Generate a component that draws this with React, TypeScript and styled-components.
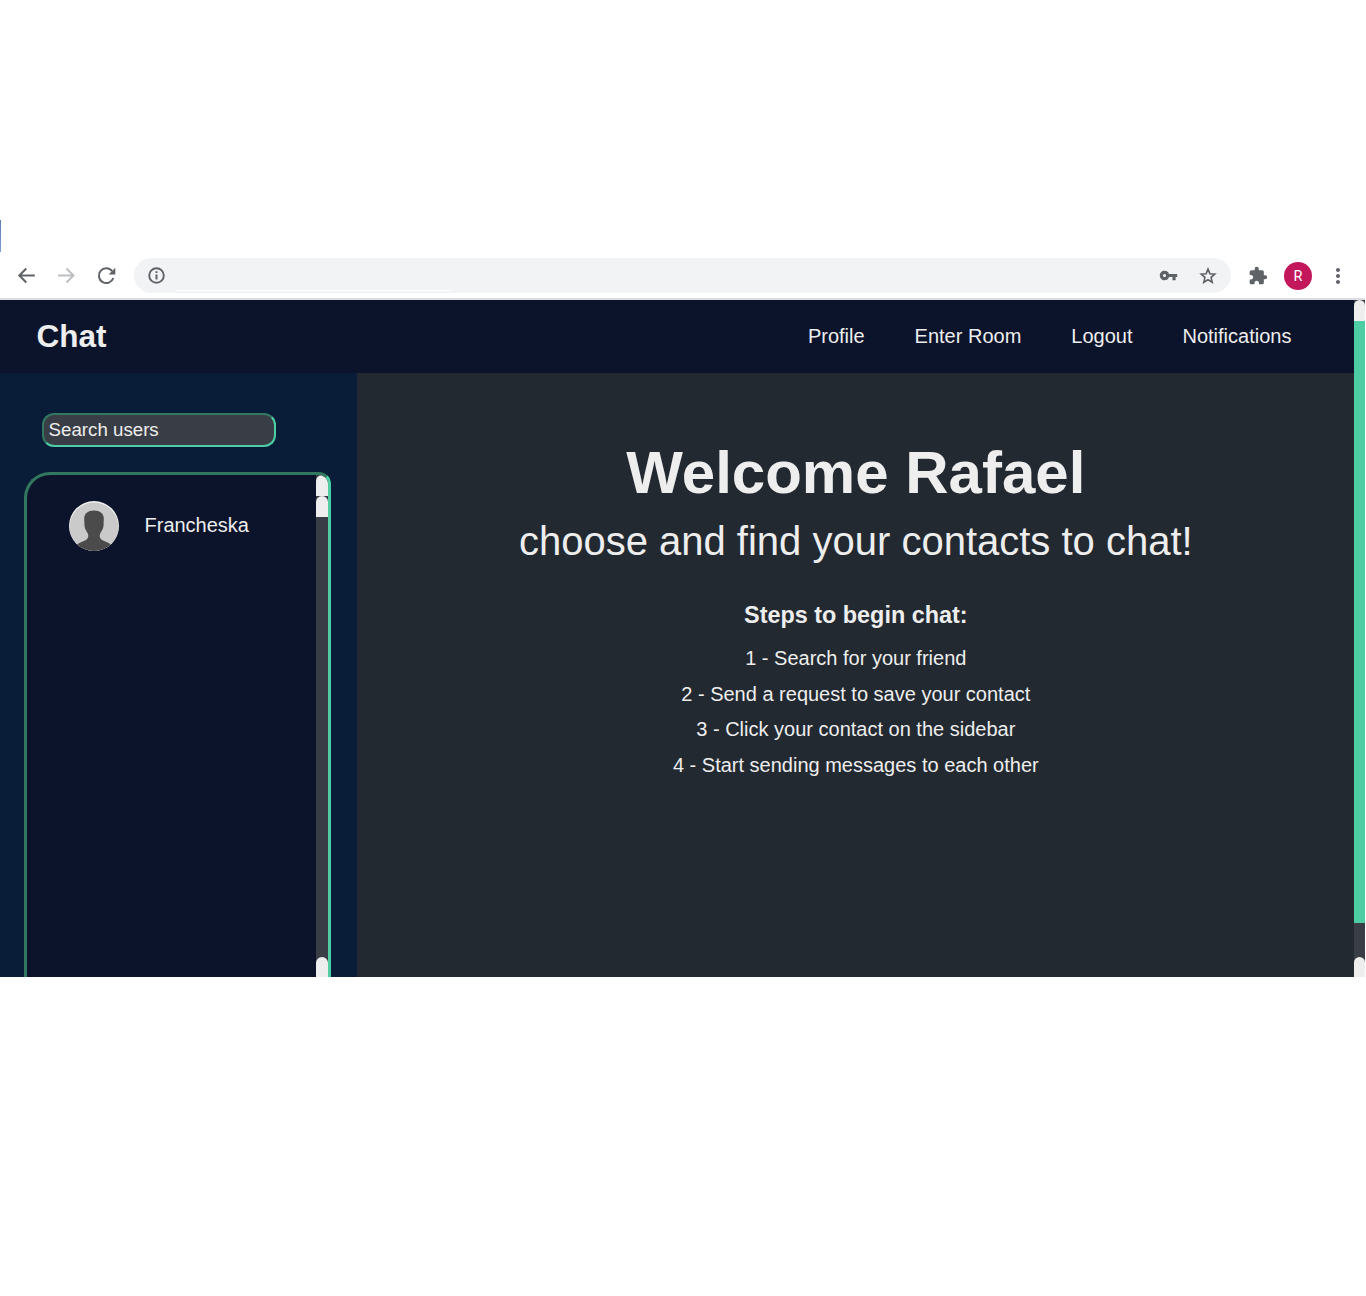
import React from "react";
import styled, { createGlobalStyle } from "styled-components";
import { MdVpnKey, MdExtension, MdMoreVert } from "react-icons/md";

const Global = createGlobalStyle`
  * { box-sizing: border-box; }
  body { margin: 0; background: #fff; font-family: "Liberation Sans", Arial, sans-serif; }
  h1, h2, h3, p, ol, ul { margin: 0; padding: 0; list-style: none; }
`;

const Page = styled.div`
  width: 1365px;
  height: 1296px;
  padding-top: 220px;
`;

const TabStrip = styled.div`
  height: 32px;
  width: 1px;
  background: linear-gradient(#5d7fb0, #7a9fd6);
`;

const Toolbar = styled.div`
  height: 48px;
  display: flex;
  align-items: center;
  padding: 0 0 0 14px;
  border-bottom: 2px solid #dcdee2;
`;

const ToolButton = styled.span<{ $width: number; $color?: string }>`
  width: ${(p) => p.$width}px;
  height: 24px;
  padding-top: 1px;
  display: flex;
  align-items: center;
  justify-content: center;
  flex: none;
  color: ${(p) => p.$color ?? "#5f6368"};
`;

const AddressBar = styled.div`
  width: 1097px;
  height: 35px;
  flex: none;
  border-radius: 18px;
  background: #f1f3f4;
  display: flex;
  align-items: center;
  padding: 0 13px;
`;

const AddressText = styled.div`
  align-self: flex-end;
  width: 275px;
  height: 1px;
  margin: 0 auto 2px 9px;
  background: #fff;
`;

const Account = styled.div`
  width: 28px;
  height: 28px;
  flex: none;
  border-radius: 50%;
  background: #c2185b;
  color: #fff;
  font: 14.5px/29px Roboto, sans-serif;
  text-align: center;
  margin-top: 1px;
`;

const Viewport = styled.div`
  height: 677px;
  display: flex;
  overflow: hidden;
`;

const Content = styled.div`
  flex: 1;
  display: flex;
  flex-direction: column;
`;

const Navbar = styled.header`
  height: 73px;
  padding: 0 62.6px 2px 36.4px;
  display: flex;
  align-items: center;
  justify-content: space-between;
  background: #0c142b;
  color: #eee;
`;

const Brand = styled.h1`
  font-size: 31.5px;
  line-height: 36px;
`;

const Nav = styled.nav`
  display: flex;
  gap: 50px;
  font-size: 20px;
  line-height: 24px;
`;

const Body = styled.div`
  flex: 1;
  display: flex;
`;

const Sidebar = styled.aside`
  width: 357px;
  padding: 40px 26px 0 24px;
  background: #091d38;
  display: flex;
  flex-direction: column;
`;

const Search = styled.div`
  width: 234px;
  height: 34px;
  margin-left: 18px;
  padding-left: 4.6px;
  border: 2px solid;
  border-color: #31785f #4ecca3 #4ecca3 #31785f;
  border-radius: 12px;
  background: #393e46;
  color: #eee;
  font-size: 18.7px;
  line-height: 30px;
`;

const ContactPanel = styled.div`
  flex: 1;
  margin-top: 25px;
  display: flex;
  overflow: hidden;
  border: 3px solid;
  border-bottom: 0;
  border-color: #31785f #4ecca3 #4ecca3 #31785f;
  border-radius: 26px 12px 0 0;
  background: #0c142b;
`;

const Contacts = styled.ul`
  flex: 1;
  padding: 26px 0 0 42px;
`;

const Contact = styled.li`
  display: flex;
  align-items: center;
  gap: 25.5px;
  height: 50px;
  color: #eee;
  font-size: 20px;
`;

const ContactName = styled.span`
  padding-bottom: 2px;
`;

const Scroll = styled.div<{ $width: number }>`
  width: ${(p) => p.$width}px;
  flex: none;
  display: flex;
  flex-direction: column;
  background: #393e46;
`;

const ScrollButton = styled.span<{ $last?: boolean; $height?: number }>`
  height: ${(p) => p.$height ?? 21}px;
  margin-top: ${(p) => (p.$last ? "auto" : 0)};
  border-radius: 6px 6px 0 0;
  background: #eee;
`;

const Thumb = styled.span`
  height: 602px;
  background: #4ecca3;
`;

const Main = styled.main`
  flex: 1;
  padding: 65px 0 0 0.6px;
  background: #232931;
  color: #eee;
  text-align: center;
`;

const Title = styled.h2`
  font-size: 60px;
  line-height: 69px;
`;

const Subtitle = styled.p`
  font-size: 40px;
  line-height: 46px;
  margin-top: 11px;
`;

const StepsTitle = styled.h3`
  font-size: 23.4px;
  line-height: 28px;
  margin-top: 37px;
`;

const Steps = styled.ol`
  margin-top: 12px;
  font-size: 20px;
  line-height: 35.6px;
`;

const Arrow = ({ forward }: { forward?: boolean }) => (
  <svg width="24" height="24" viewBox="0 0 24 24" fill="none" stroke="currentColor" strokeWidth="2">
    <path d={forward ? "M4 11.500H19.500M12.500 4.500L19.500 11.500L12.500 18.500" : "M20.800 11.500H5.300M12.300 4.500L5.300 11.500L12.300 18.500"} />
  </svg>
);

const Reload = () => (
  <svg width="24" height="24" viewBox="0 0 24 24">
    <path d="M18 7A7.400 7.400 0 1 0 19.300 14" fill="none" stroke="currentColor" strokeWidth="2" />
    <path d="M21.300 3.800V10.500H14.600Z" fill="currentColor" />
  </svg>
);

const Info = () => (
  <svg width="20" height="20" viewBox="0 0 20 20">
    <circle cx="9.500" cy="9.500" r="7.300" fill="none" stroke="currentColor" strokeWidth="1.900" />
    <path d="M8.500 5.300H10.500V7.100H8.500ZM8.500 8.500H10.500V13.500H8.500Z" fill="currentColor" />
  </svg>
);

const Star = () => (
  <svg width="22" height="22" viewBox="0 0 24 24" fill="none" stroke="currentColor" strokeWidth="2">
    <path d="M12 3.800L14.300 9.300L20.100 9.800L15.700 13.700L17 19.400L12 16.400L7 19.400L8.300 13.700L3.900 9.800L9.700 9.300Z" />
  </svg>
);

const Avatar = () => (
  <svg width="50" height="50" viewBox="0 0 50 50">
    <defs>
      <clipPath id="face"><circle cx="25" cy="25" r="25" /></clipPath>
    </defs>
    <g clipPath="url(#face)">
      <rect width="50" height="50" fill="#eee" />
      <circle cx="25" cy="26" r="24.4" fill="#cacaca" />
      <path d="M25 9.500C19 9.500 15.200 12.500 15.200 17.500L15.500 25C15.700 28 17.600 30 18.800 32.500C20 36 19 38 15.500 39.800C12 41.300 9.500 42 7.500 44V50H42.500V44C40.500 42 38 41.300 34.500 39.800C31 38 30 36 31.200 32.500C32.400 30 34.300 28 34.500 25L34.800 17.500C34.800 12.500 31 9.500 25 9.500Z" fill="#4b4b4b" />
    </g>
  </svg>
);

const links = ["Profile", "Enter Room", "Logout", "Notifications"];
const steps = [
  "1 - Search for your friend",
  "2 - Send a request to save your contact",
  "3 - Click your contact on the sidebar",
  "4 - Start sending messages to each other",
];

export default function App() {
  return (
    <Page>
      <Global />
      <TabStrip />
      <Toolbar>
        <ToolButton $width={24}><Arrow /></ToolButton>
        <ToolButton $width={56} $color="#bcbec0"><Arrow forward /></ToolButton>
        <ToolButton $width={24}><Reload /></ToolButton>
        <ToolButton $width={16} />
        <AddressBar>
          <ToolButton $width={20}><Info /></ToolButton>
          <AddressText />
          <ToolButton $width={20}><MdVpnKey size={19} /></ToolButton>
          <ToolButton $width={20} />
          <ToolButton $width={20}><Star /></ToolButton>
        </AddressBar>
        <ToolButton $width={53}><MdExtension size={20} /></ToolButton>
        <Account>R</Account>
        <ToolButton $width={51}><MdMoreVert size={24} /></ToolButton>
      </Toolbar>
      <Viewport>
        <Content>
          <Navbar>
            <Brand>Chat</Brand>
            <Nav>{links.map((l) => <span key={l}>{l}</span>)}</Nav>
          </Navbar>
          <Body>
            <Sidebar>
              <Search>Search users</Search>
              <ContactPanel>
                <Contacts>
                  <Contact><Avatar /><ContactName>Francheska</ContactName></Contact>
                </Contacts>
                <Scroll $width={12}>
                  <ScrollButton />
                  <ScrollButton />
                  <ScrollButton $last $height={20} />
                </Scroll>
              </ContactPanel>
            </Sidebar>
            <Main>
              <Title>Welcome Rafael</Title>
              <Subtitle>choose and find your contacts to chat!</Subtitle>
              <StepsTitle>Steps to begin chat:</StepsTitle>
              <Steps>{steps.map((s) => <li key={s}>{s}</li>)}</Steps>
            </Main>
          </Body>
        </Content>
        <Scroll $width={11}>
          <ScrollButton />
          <Thumb />
          <ScrollButton $last $height={20} />
        </Scroll>
      </Viewport>
    </Page>
  );
}
